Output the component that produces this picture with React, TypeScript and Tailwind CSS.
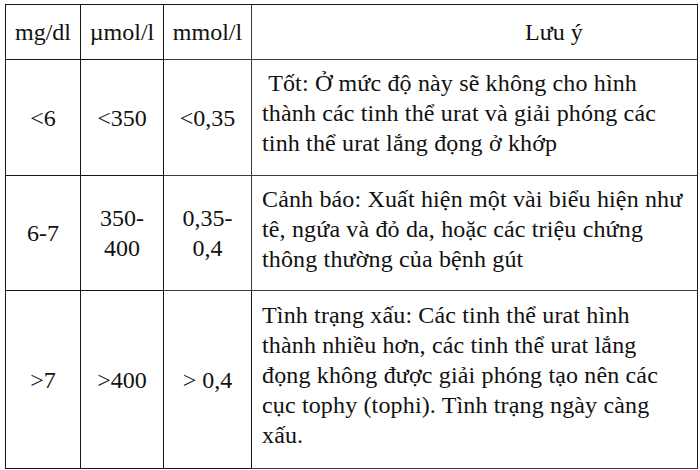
import React from "react";

const dark = "border-[#161616]";

function NumCell({ lines, right = dark, bottom = "border-[#3c3c3c]" }: { lines: string[]; right?: string; bottom?: string }) {
  return (
    <div className={`flex flex-col items-center justify-center text-center border-r border-b ${right} ${bottom}`}>
      {lines.map((l, i) => (
        <div key={i}>{l}</div>
      ))}
    </div>
  );
}

function NoteCell({ lines }: { lines: string[] }) {
  return (
    <div className="flex flex-col justify-center border-r border-b border-r-[#1a1a1a] border-b-[#3c3c3c] pl-[10px] pb-[9px] whitespace-pre tracking-[0.15px]">
      {lines.map((l, i) => (
        <div key={i}>{l}</div>
      ))}
    </div>
  );
}

export default function App() {
  const rows: { a: string[]; b: string[]; c: string[]; note: string[] }[] = [
    {
      a: ["<6"],
      b: ["<350"],
      c: ["<0,35"],
      note: [
        "\u00a0Tốt: Ở mức độ này sẽ không cho hình",
        "thành các tinh thể urat và giải phóng các",
        "tinh thể urat lắng đọng ở khớp",
      ],
    },
    {
      a: ["6-7"],
      b: ["350-", "400"],
      c: ["0,35-", "0,4"],
      note: [
        "Cảnh báo: Xuất hiện một vài biểu hiện như",
        "tê, ngứa và đỏ da, hoặc các triệu chứng",
        "thông thường của bệnh gút",
      ],
    },
    {
      a: [">7"],
      b: [">400"],
      c: ["> 0,4"],
      note: [
        "Tình trạng xấu: Các tinh thể urat hình",
        "thành nhiều hơn, các tinh thể urat lắng",
        "đọng không được giải phóng tạo nên các",
        "cục tophy (tophi). Tình trạng ngày càng",
        "xấu.",
      ],
    },
  ];

  return (
    <div className="w-[700px] h-[470px] bg-white pl-[5px] pt-[4px] font-['Liberation_Serif'] text-[24px] leading-[30px] text-[#111]">
      <div className="grid w-fit grid-cols-[75px_83px_88px_446px] grid-rows-[55px_116px_115px_178px] border-l border-t border-l-[#161616] border-t-[#161616]">
        <NumCell lines={["mg/dl"]} />
        <NumCell lines={["µmol/l"]} />
        <NumCell lines={["mmol/l"]} right="border-[#3c3c3c]" />
        <div className="flex items-center border-r border-b border-r-[#1a1a1a] border-b-[#3c3c3c] pl-[273px]">
          Lưu ý
        </div>
        {rows.map((r, i) => (
          <React.Fragment key={i}>
            <NumCell lines={r.a} bottom={i === 2 ? "border-[#161616]" : "border-[#3c3c3c]"} />
            <NumCell lines={r.b} bottom={i === 2 ? "border-[#161616]" : "border-[#3c3c3c]"} />
            <NumCell lines={r.c} right="border-[#3c3c3c]" bottom={i === 2 ? "border-[#161616]" : "border-[#3c3c3c]"} />
            <NoteCell lines={r.note} />
          </React.Fragment>
        ))}
      </div>
    </div>
  );
}
